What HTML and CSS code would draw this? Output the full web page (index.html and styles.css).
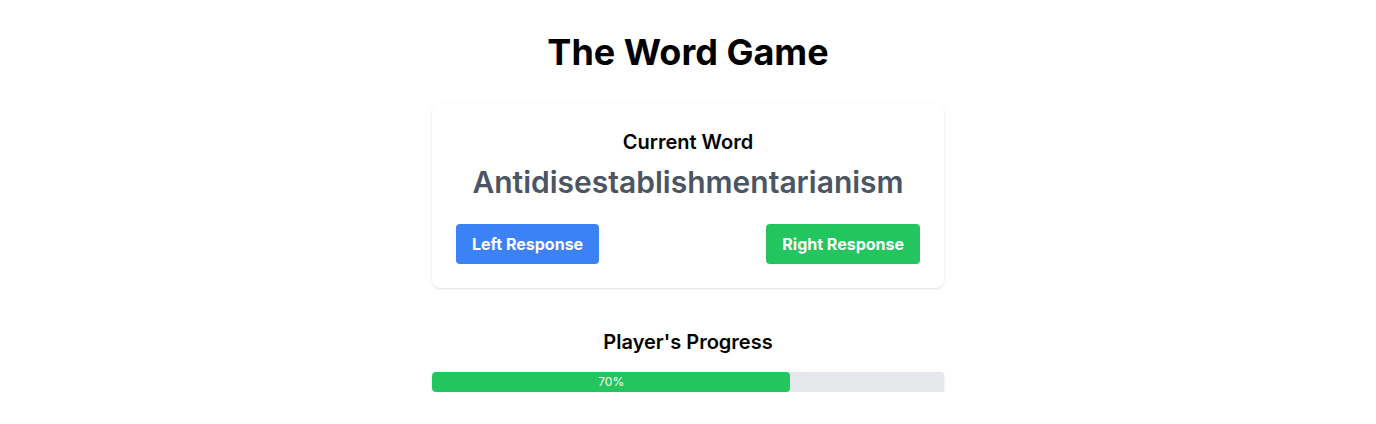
FILE: index.html
```html
<!DOCTYPE html>
<html lang="en">
<head>
<meta charset="utf-8">
<title>The Word Game</title>
<link rel="stylesheet" href="styles.css">
</head>
<body>
<main class="page">
  <h1 class="title">The Word Game</h1>
  <section class="card">
    <h2 class="card-label">Current Word</h2>
    <p class="word">Antidisestablishmentarianism</p>
    <div class="actions">
      <button class="btn btn-left">Left Response</button>
      <button class="btn btn-right">Right Response</button>
    </div>
  </section>
  <section class="progress">
    <h2 class="progress-title">Player's Progress</h2>
    <div class="track">
      <div class="fill" style="width: 70%">70%</div>
    </div>
  </section>
</main>
</body>
</html>
```
FILE: styles.css
```css
* { box-sizing: border-box; }
html, body { margin: 0; padding: 0; background: #ffffff; }
body { font-family: "Inter", "Liberation Sans", sans-serif; color: #000; }
.page {
  display: flex;
  flex-direction: column;
  align-items: center;
  padding-top: 32px;
}
.title {
  margin: 0 0 32px;
  font-size: 36px;
  line-height: 40px;
  font-weight: 700;
}
.card {
  width: 512px;
  padding: 24px;
  background: #fff;
  border-radius: 8px;
  box-shadow: 0 1px 3px 0 rgba(0,0,0,0.1), 0 1px 2px -1px rgba(0,0,0,0.1);
  display: flex;
  flex-direction: column;
  align-items: center;
}
.card-label {
  margin: 0;
  font-size: 20px;
  line-height: 28px;
  font-weight: 600;
}
.word {
  margin: 8px 0 0;
  font-size: 30px;
  line-height: 36px;
  font-weight: 600;
  color: #4b5563;
}
.actions {
  margin-top: 24px;
  width: 100%;
  display: flex;
  justify-content: space-between;
}
.btn {
  font-family: inherit;
  border: 0;
  border-radius: 4px;
  padding: 8px 16px;
  font-size: 16px;
  line-height: 24px;
  font-weight: 700;
  color: #fff;
  cursor: pointer;
}
.btn-left { background: #3b82f6; }
.btn-right { background: #22c55e; }
.progress {
  width: 512px;
  margin-top: 40px;
  display: flex;
  flex-direction: column;
  align-items: center;
}
.progress-title {
  margin: 0 0 16px;
  font-size: 20px;
  line-height: 28px;
  font-weight: 600;
}
.track {
  width: 100%;
  height: 20px;
  background: #e5e7eb;
  border-radius: 4px;
  box-shadow: 0 1px 3px 0 rgba(0,0,0,0.1), 0 1px 2px -1px rgba(0,0,0,0.1);
  overflow: hidden;
}
.fill {
  height: 100%;
  background: #22c55e;
  border-radius: 4px;
  color: #fff;
  font-size: 12px;
  line-height: 20px;
  text-align: center;
}
```
